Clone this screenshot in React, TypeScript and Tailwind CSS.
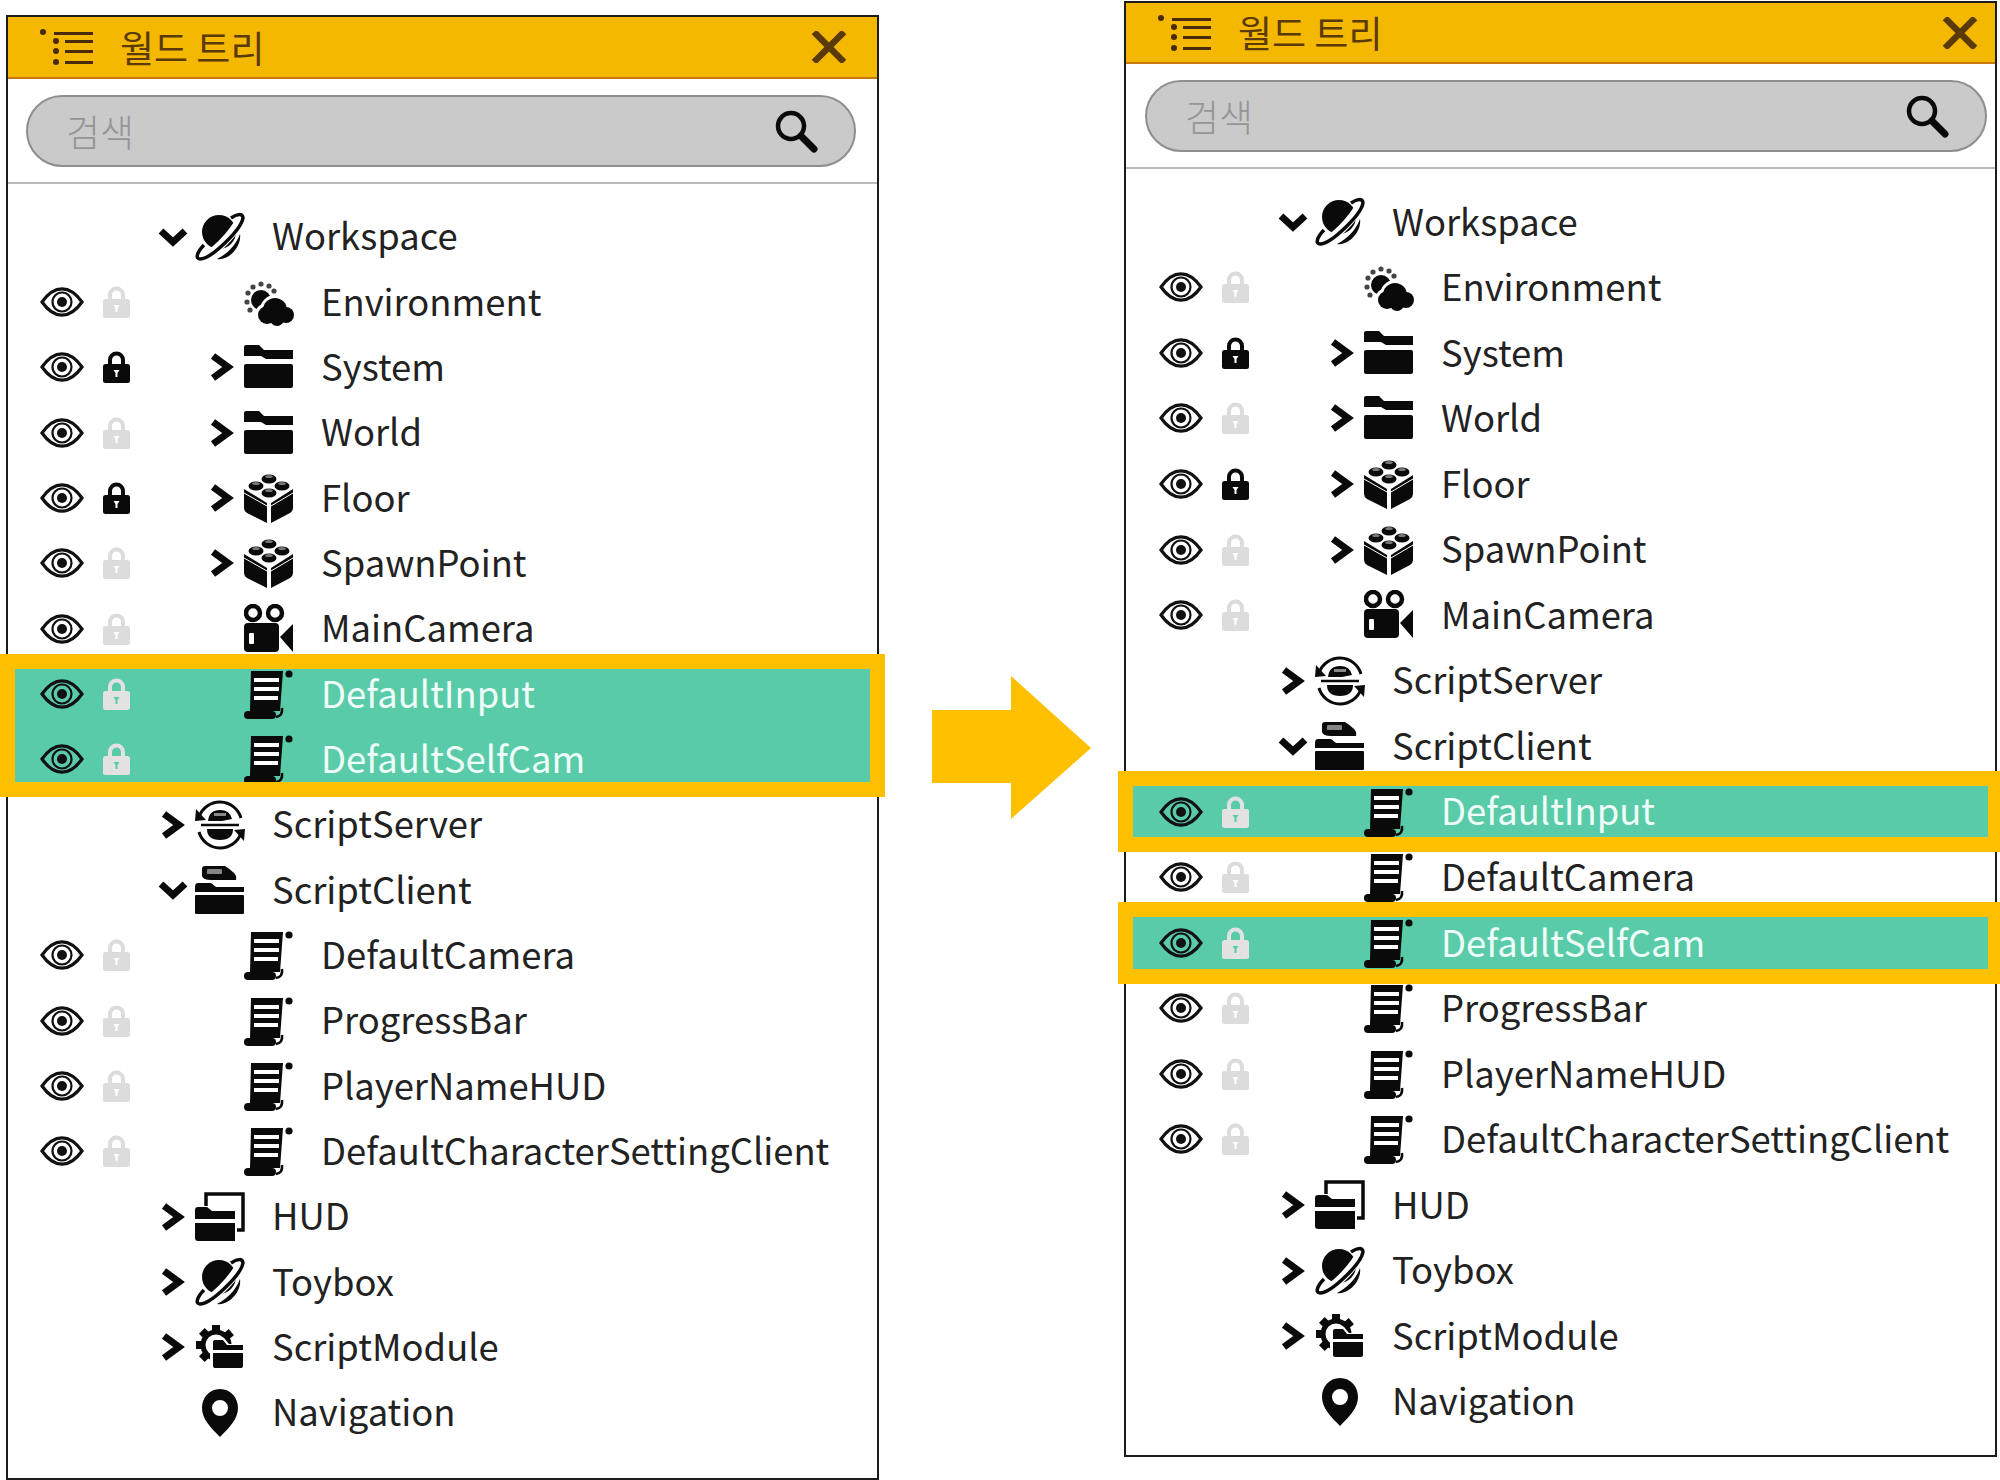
const rows = [
  { name: "Workspace", depth: 0, chevron: "down", icon: "planet" },
  { name: "Environment", depth: 1, icon: "weather", lock: "off" },
  { name: "System", depth: 1, chevron: "right", icon: "folder", lock: "on" },
  { name: "World", depth: 1, chevron: "right", icon: "folder", lock: "off" },
  { name: "Floor", depth: 1, chevron: "right", icon: "cube", lock: "on" },
  { name: "SpawnPoint", depth: 1, chevron: "right", icon: "cube", lock: "off" },
  { name: "MainCamera", depth: 1, icon: "camera", lock: "off" },
];

const scriptRows = {
  input: { name: "DefaultInput", depth: 1, icon: "script", lock: "off", selected: true },
  selfCam: { name: "DefaultSelfCam", depth: 1, icon: "script", lock: "off", selected: true },
  server: { name: "ScriptServer", depth: 0, chevron: "right", icon: "server" },
  client: { name: "ScriptClient", depth: 0, chevron: "down", icon: "client" },
  camera: { name: "DefaultCamera", depth: 1, icon: "script", lock: "off" },
  progress: { name: "ProgressBar", depth: 1, icon: "script", lock: "off" },
  hud: { name: "PlayerNameHUD", depth: 1, icon: "script", lock: "off" },
  character: { name: "DefaultCharacterSettingClient", depth: 1, icon: "script", lock: "off" },
};

const bottomRows = [
  { name: "HUD", depth: 0, chevron: "right", icon: "hud" },
  { name: "Toybox", depth: 0, chevron: "right", icon: "planet" },
  { name: "ScriptModule", depth: 0, chevron: "right", icon: "module" },
  { name: "Navigation", depth: 0, icon: "pin" },
];

type RowData = {
  name: string;
  depth: number;
  chevron?: string;
  icon: string;
  lock?: string;
  selected?: boolean;
};

function Eye() {
  return (
    <svg viewBox="0 0 44 30" className="h-[30px] w-[44px]">
      <path d="M2 15C9 5 15 1.8 22 1.8s13 3.2 20 13.2c-7 10-13 13.2-20 13.2S9 25 2 15Z" fill="none" stroke="#111" strokeWidth="3.2" />
      <circle cx="22" cy="15" r="9.5" fill="none" stroke="#111" strokeWidth="2.2" />
      <circle cx="22" cy="15" r="5" fill="#111" />
    </svg>
  );
}

function Lock({ on, selected }: { on: boolean; selected?: boolean }) {
  const color = on ? "#0a0a0a" : selected ? "#e2e2e2" : "#dcdcdc";
  const hole = on ? "#fff" : selected ? "#5acba8" : "#fff";
  return (
    <svg viewBox="0 0 27 32" className="h-[32px] w-[27px]">
      <path d="M7 15V9a6.5 6.5 0 0 1 13 0v6" fill="none" stroke={color} strokeWidth="4" />
      <rect x="0" y="13" width="27" height="19" rx="2.5" fill={color} />
      <path d="M10.5 19h6l-2 3v4h-2v-4Z" fill={hole} />
    </svg>
  );
}

function Chevron({ dir }: { dir: string }) {
  if (dir === "down") {
    return (
      <svg viewBox="0 0 30 30" className="h-[30px] w-[30px]">
        <path d="M3 9l12 11L27 9" fill="none" stroke="#0a0a0a" strokeWidth="7" />
      </svg>
    );
  }
  return (
    <svg viewBox="0 0 30 30" className="h-[30px] w-[30px]">
      <path d="M6 4l15 11L6 26" fill="none" stroke="#0a0a0a" strokeWidth="7" />
    </svg>
  );
}

function Stud({ x, y }: { x: number; y: number }) {
  return (
    <>
      <ellipse cx={x} cy={y + 2} rx="7.5" ry="4.6" fill="#0a0a0a" />
      <ellipse cx={x} cy={y - 0.5} rx="3.8" ry="1.6" fill="#777" />
    </>
  );
}

function TreeIcon({ kind }: { kind: string }) {
  const k = "#0a0a0a";
  let body = null;
  if (kind === "planet") {
    body = (
      <>
        <circle cx="24" cy="20" r="17" fill={k} />
        <path d="M3 47C16 45 38 24 48 3" fill="none" stroke="#fff" strokeWidth="9" />
        <path d="M9 33C2 40 0 47 5 47C16 47 46 18 48 6C48 1 42 2 36 6" fill="none" stroke={k} strokeWidth="3.5" />
        <path d="M22 47C32 42 41 33 45 22C47 34 34 49 22 47Z" fill={k} />
      </>
    );
  } else if (kind === "weather") {
    body = (
      <>
        <circle cx="17" cy="23" r="10" fill={k} />
        <g fill="#444">
          <circle cx="4" cy="16" r="2.6" />
          <circle cx="9" cy="10" r="2.6" />
          <circle cx="17" cy="7" r="2.6" />
          <circle cx="25" cy="9" r="2.6" />
          <circle cx="30" cy="14" r="2.6" />
          <circle cx="3" cy="25" r="2.6" />
          <circle cx="6" cy="33" r="2.6" />
        </g>
        <g fill="#fff">
          <circle cx="23" cy="38" r="12" />
          <circle cx="31" cy="33" r="15" />
        </g>
        <g fill={k}>
          <circle cx="23" cy="38" r="9" />
          <circle cx="31" cy="33" r="12" />
          <circle cx="42" cy="38" r="8" />
          <circle cx="33" cy="42" r="7" />
        </g>
      </>
    );
  } else if (kind === "folder") {
    body = (
      <>
        <path d="M0 5q0-2 2-2h13l5 5h29v9H22l-5-3H0Z" fill={k} />
        <rect x="0" y="22" width="49" height="24" rx="2" fill={k} />
      </>
    );
  } else if (kind === "cube") {
    body = (
      <>
        <Stud x={25} y={4} />
        <Stud x={12} y={11} />
        <Stud x={38} y={11} />
        <Stud x={25} y={18} />
        <g fill={k}>
          <path d="M0 16L23 30V50L3 40Q0 38 0 35Z" />
          <path d="M49 16L27 30V50L46 40Q49 38 49 35Z" />
        </g>
        <path d="M0 20L23 33M49 20L27 33" stroke="#fff" strokeWidth="1" />
      </>
    );
  } else if (kind === "camera") {
    body = (
      <>
        <circle cx="9" cy="9" r="7" fill="none" stroke={k} strokeWidth="4.5" />
        <circle cx="31" cy="9" r="7" fill="none" stroke={k} strokeWidth="4.5" />
        <rect x="0" y="19" width="35" height="29" rx="4" fill={k} />
        <rect x="5" y="29" width="5" height="11" rx="1" fill="#fff" />
        <path d="M36 33L49 20V48Z" fill={k} />
      </>
    );
  } else if (kind === "script") {
    body = (
      <>
        <path d="M7 2H39L36 42H6Z" fill={k} />
        <g fill="#fff">
          <rect x="10" y="9" width="25" height="4" />
          <rect x="10" y="18" width="25" height="4" />
          <rect x="10" y="27" width="24" height="4" />
        </g>
        <circle cx="45" cy="5" r="3.6" fill={k} />
        <rect x="0" y="42" width="32" height="8" rx="4" fill={k} />
        <path d="M38 39q1 8-6 9" fill="none" stroke={k} strokeWidth="2.6" />
      </>
    );
  } else if (kind === "server") {
    body = (
      <>
        <path d="M4 17A22 22 0 0 1 46 18" fill="none" stroke={k} strokeWidth="3" />
        <path d="M46 33A22 22 0 0 1 4 32" fill="none" stroke={k} strokeWidth="3" />
        <path d="M1 9L11 20L0 21Z" fill={k} />
        <path d="M49 41L39 30L50 29Z" fill={k} />
        <path d="M13 21q1-11 12-11q10 0 12 9l-10 2Z" fill={k} />
        <rect x="19" y="13" width="12" height="3" fill="#888" />
        <path d="M6 25H44" stroke={k} strokeWidth="2.5" />
        <path d="M12 29H38q0 11-13 11T12 29Z" fill={k} />
      </>
    );
  } else if (kind === "client") {
    body = (
      <>
        <path d="M7 4q0-3 3-3H30q5 3 9 7q3 3 2 7H16q-8 0-9-4Z" fill={k} />
        <rect x="12" y="4" width="15" height="5" rx="1" fill="#fff" opacity="0.5" />
        <path d="M0 22q0-4 3-4h13l5 4h28v5H0Z" fill={k} />
        <rect x="0" y="30" width="49" height="19" rx="1" fill={k} />
      </>
    );
  } else if (kind === "hud") {
    body = (
      <>
        <path d="M11 14V2H48V38H42" fill="none" stroke={k} strokeWidth="3.5" />
        <path d="M0 18q0-3 3-3h9l5 4h23v8H0Z" fill={k} />
        <path d="M0 31H40V49H3q-3 0-3-3Z" fill={k} />
      </>
    );
  } else if (kind === "module") {
    body = (
      <>
        <circle cx="21" cy="23" r="13" fill="none" stroke={k} strokeWidth="5" />
        <g fill={k}>
          <rect x="17" y="3" width="8" height="6" />
          <rect x="17" y="3" width="8" height="6" transform="rotate(50 21 23)" />
          <rect x="17" y="3" width="8" height="6" transform="rotate(-45 21 23)" />
          <rect x="17" y="3" width="8" height="6" transform="rotate(-90 21 23)" />
          <rect x="17" y="3" width="8" height="6" transform="rotate(-135 21 23)" />
          <rect x="17" y="3" width="8" height="6" transform="rotate(180 21 23)" />
        </g>
        <path d="M15 16h14l5 6h16v27H15Z" fill="#fff" />
        <g fill={k}>
          <path d="M18 20q0-2 2-2h8l4 5h16v5H18Z" />
          <path d="M18 31H48V44q0 2-2 2H20q-2 0-2-2Z" />
        </g>
      </>
    );
  } else {
    body = (
      <path fillRule="evenodd" d="M25 1C14 1 7 10 7 20c0 11 9 20 18 29c9-9 18-18 18-29C43 10 36 1 25 1Zm0 11a8 8 0 1 1 0 16a8 8 0 0 1 0-16Z" fill={k} />
    );
  }
  return (
    <svg viewBox="0 0 50 50" className="h-[50px] w-[50px] shrink-0">
      {body}
    </svg>
  );
}

function TreeRow({ row, before }: { row: RowData; before: boolean }) {
  return (
    <div className={`flex items-center ${before ? "h-[65.33px]" : "h-[65.55px]"} ${row.selected ? "bg-[#5acba8]" : ""}`}>
      <div className={`flex shrink-0 items-center gap-[19px] ${before ? "w-[150px] pl-[32px]" : "w-[152px] pl-[33px]"}`}>
        {row.lock && (
          <>
            <Eye />
            <Lock on={row.lock === "on"} selected={row.selected} />
          </>
        )}
      </div>
      <div className={`flex items-center ${row.depth === 1 ? "pl-[49px]" : ""}`}>
        <div className="mr-[7px] h-[30px] w-[30px] shrink-0">{row.chevron && <Chevron dir={row.chevron} />}</div>
        <TreeIcon kind={row.icon} />
        <span className={`ml-[27px] pb-[4px] text-[36.4px] leading-none whitespace-nowrap ${row.selected ? "text-[#eefdf7]" : "text-[#222]"}`}>
          {row.name}
        </span>
      </div>
    </div>
  );
}

function Panel({ variant }: { variant: "before" | "after" }) {
  const before = variant === "before";
  const s = scriptRows;

  return (
    <div className={`flex w-[873px] shrink-0 flex-col border-2 border-[#1c1c1c] bg-white ${before ? "mt-[15px] h-[1465px]" : "mt-[1px] h-[1456px]"}`}>
      <div
        className={`flex shrink-0 items-center border-b-2 border-[#c9780f] bg-[#f4b800] pl-[32px] ${
          before ? "h-[62px] pr-[30px]" : "h-[61px] pr-[17px]"
        }`}
      >
        <svg viewBox="0 0 53 36" className="h-[36px] w-[53px] shrink-0">
          <g fill="#4a2a08">
            <circle cx="3" cy="3" r="3" />
            <circle cx="16" cy="12" r="3" />
            <circle cx="16" cy="22" r="3" />
            <circle cx="16" cy="33" r="3" />
            <rect x="14" y="3" width="39" height="3" />
            <rect x="25" y="11" width="28" height="3" />
            <rect x="25" y="21" width="28" height="3" />
            <rect x="25" y="32" width="28" height="3" />
          </g>
        </svg>
        <span className="ml-[27px] text-[37px] leading-none font-normal text-[#5b3a0a]">월드 트리</span>
        <svg viewBox="0 0 36 32" className="ml-auto h-[32px] w-[36px]">
          <path d="M3 1l30 30M33 1L3 31" stroke="#5b3a0a" strokeWidth="6.5" />
        </svg>
      </div>

      <div className={`shrink-0 border-b-2 border-[#b8bbb8] pb-[15px] pt-[16px] ${before ? "pl-[18px] pr-[21px]" : "pl-[19px] pr-[8px]"}`}>
        <div className="flex h-[72px] items-center rounded-full border-2 border-[#8e8e8e] bg-[#cacaca] pl-[38px] pr-[36px]">
          <span className="text-[37px] leading-none font-light text-[#959595]">검색</span>
          <svg viewBox="0 0 44 44" className="ml-auto h-[44px] w-[44px]">
            <circle cx="17" cy="17" r="13" fill="none" stroke="#0a0a0a" strokeWidth="4.5" />
            <path d="M27 27l13 13" stroke="#0a0a0a" strokeWidth="7" strokeLinecap="round" />
          </svg>
        </div>
      </div>

      <div className="pt-[20px]">
        {rows.map((row) => (
          <TreeRow key={row.name} row={row} before={before} />
        ))}
        {before ? (
          <>
            <div className="relative">
              <TreeRow row={s.input} before={before} />
              <TreeRow row={s.selfCam} before={before} />
              <div className="pointer-events-none absolute -inset-x-[8px] -bottom-[5px] -top-[7px] border-[15px] border-[#ffc000]" />
            </div>
            <TreeRow row={s.server} before={before} />
            <TreeRow row={s.client} before={before} />
            <TreeRow row={s.camera} before={before} />
          </>
        ) : (
          <>
            <TreeRow row={s.server} before={before} />
            <TreeRow row={s.client} before={before} />
            <div className="relative">
              <TreeRow row={s.input} before={before} />
              <div className="pointer-events-none absolute -inset-x-[8px] -inset-y-[8px] border-[15px] border-[#ffc000]" />
            </div>
            <TreeRow row={s.camera} before={before} />
            <div className="relative">
              <TreeRow row={s.selfCam} before={before} />
              <div className="pointer-events-none absolute -inset-x-[8px] -inset-y-[8px] border-[15px] border-[#ffc000]" />
            </div>
          </>
        )}
        <TreeRow row={s.progress} before={before} />
        <TreeRow row={s.hud} before={before} />
        <TreeRow row={s.character} before={before} />
        {bottomRows.map((row) => (
          <TreeRow key={row.name} row={row} before={before} />
        ))}
      </div>
    </div>
  );
}

export default function App() {
  return (
    <div className="flex h-[1480px] w-[2000px] items-start overflow-hidden bg-white pl-[6px] font-['Noto_Sans_CJK_KR','Noto_Sans',sans-serif]">
      <Panel variant="before" />
      <svg viewBox="0 0 159 143" className="ml-[53px] mr-[33px] mt-[676px] h-[143px] w-[159px] shrink-0">
        <path d="M0 34H79V0L159 72L79 143V107H0Z" fill="#ffc000" />
      </svg>
      <Panel variant="after" />
    </div>
  );
}
